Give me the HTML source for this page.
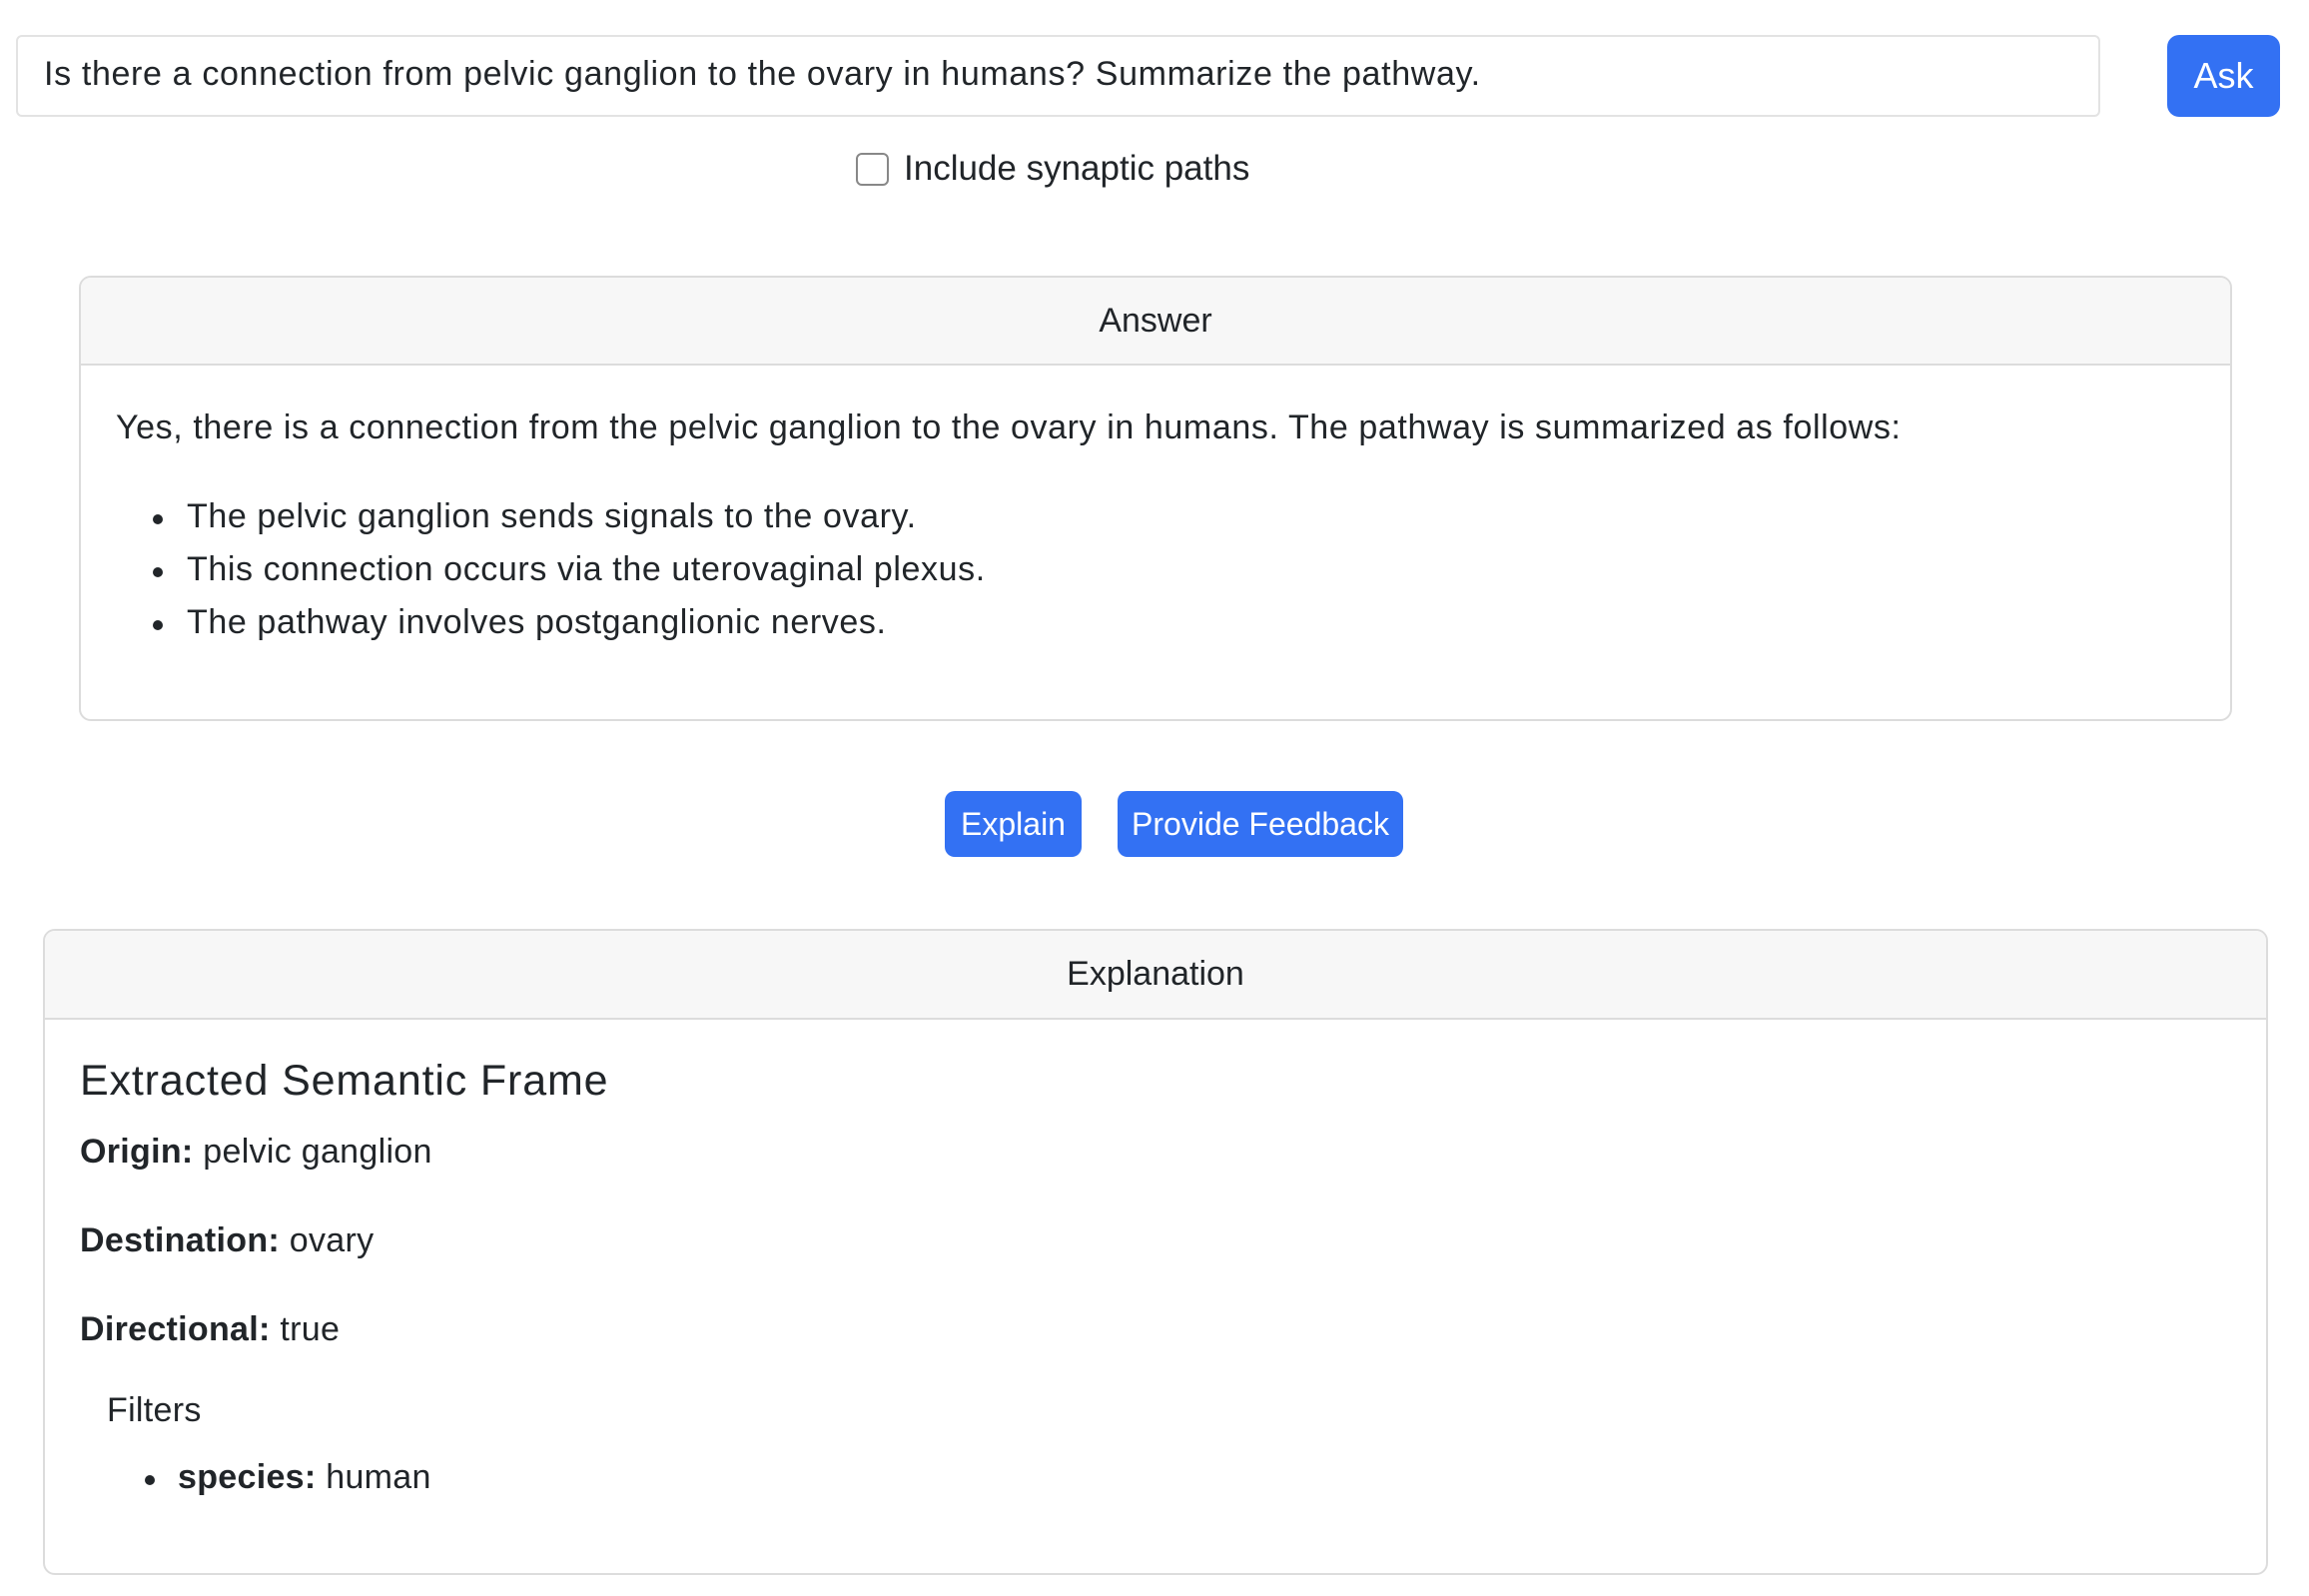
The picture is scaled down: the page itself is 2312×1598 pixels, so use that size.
<!DOCTYPE html>
<html><head><meta charset="utf-8"><style>
*{margin:0;padding:0;box-sizing:border-box}
body{width:2312px;height:1598px;background:#fff;font-family:"Liberation Sans",sans-serif;color:#212529;position:relative;overflow:hidden;font-size:34px}
.a{position:absolute;white-space:nowrap;line-height:1}
.input{position:absolute;border:2px solid #e3e3e3;border-radius:6px}
.btn{position:absolute;background:#3371f3;color:#fff;border-radius:10px;display:flex;align-items:center;justify-content:center}
.card{position:absolute;border:2px solid #dcdcdc;border-radius:12px;overflow:hidden}
.hd{background:#f7f7f7;border-bottom:2px solid #dcdcdc;display:flex;align-items:center;justify-content:center}
.dot{position:absolute;width:10px;height:10px;border-radius:50%;background:#212529}
</style></head><body>
<div class="input" style="left:16px;top:35px;width:2087px;height:82px"></div>
<div class="a" style="left:44px;top:57px;letter-spacing:0.65px">Is there a connection from pelvic ganglion to the ovary in humans? Summarize the pathway.</div>
<div class="btn" style="left:2170px;top:35px;width:113px;height:82px;font-size:36px;border-radius:12px">Ask</div>
<div style="position:absolute;left:857px;top:153px;width:33px;height:33px;border:2px solid #888;border-radius:6px"></div>
<div class="a" style="left:905px;top:151px;font-size:35px;letter-spacing:0px">Include synaptic paths</div>

<div class="card" style="left:79px;top:276px;width:2156px;height:446px">
<div class="hd" style="height:88px">Answer</div>
</div>
<div class="a" style="left:116px;top:411px;letter-spacing:0.6px">Yes, there is a connection from the pelvic ganglion to the ovary in humans. The pathway is summarized as follows:</div>
<div class="dot" style="left:153px;top:515px"></div>
<div class="a" style="left:187px;top:500px;letter-spacing:0.6px">The pelvic ganglion sends signals to the ovary.</div>
<div class="dot" style="left:153px;top:568px"></div>
<div class="a" style="left:187px;top:553px;letter-spacing:0.6px">This connection occurs via the uterovaginal plexus.</div>
<div class="dot" style="left:153px;top:621px"></div>
<div class="a" style="left:187px;top:606px;letter-spacing:0.6px">The pathway involves postganglionic nerves.</div>

<div class="btn" style="left:946px;top:792px;width:137px;height:66px;font-size:32px">Explain</div>
<div class="btn" style="left:1119px;top:792px;width:286px;height:66px;font-size:32px">Provide Feedback</div>

<div class="card" style="left:43px;top:930px;width:2228px;height:647px">
<div class="hd" style="height:89px">Explanation</div>
</div>
<div class="a" style="left:80px;top:1061px;font-size:43px;letter-spacing:0.85px">Extracted Semantic Frame</div>
<div class="a" style="left:80px;top:1136px;letter-spacing:0.3px"><b>Origin:</b> pelvic ganglion</div>
<div class="a" style="left:80px;top:1225px;letter-spacing:0.3px"><b>Destination:</b> ovary</div>
<div class="a" style="left:80px;top:1314px;letter-spacing:0.3px"><b>Directional:</b> true</div>
<div class="a" style="left:107px;top:1395px;letter-spacing:0.3px">Filters</div>
<div class="dot" style="left:145px;top:1477px"></div>
<div class="a" style="left:178px;top:1462px;letter-spacing:0.3px"><b>species:</b> human</div>
</body></html>
